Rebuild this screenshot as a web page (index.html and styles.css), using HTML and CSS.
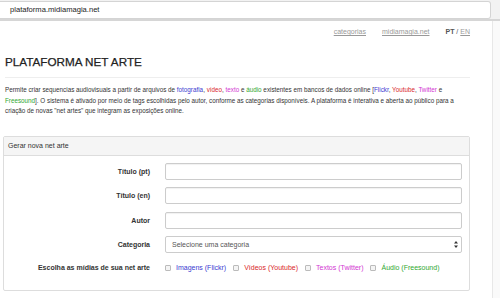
FILE: index.html
```html
<!DOCTYPE html>
<html>
<head>
  <title>Plataforma Net Arte</title>
  <link rel="stylesheet" href="styles.css">
</head>
<body>
  <div class="topbar">
    <div class="address">plataforma.midiamagia.net</div>
  </div>
  <div class="window">
    <div class="page">
      <div class="nav">
        <a href="#">categorias</a>
        <a href="#">midiamagia.net</a>
        <span class="lang"><b>PT</b> / <a href="#">EN</a></span>
      </div>
      <div class="content">
        <h1>PLATAFORMA NET ARTE</h1>
        <p class="intro">Permite criar sequencias audiovisuais a partir de arquivos de <span class="c-img">fotografia</span>, <span class="c-vid">vídeo</span>, <span class="c-txt">texto</span> e <span class="c-aud">áudio</span> existentes em bancos de dados online [<span class="c-img">Flickr</span>, <span class="c-vid">Youtube</span>, <span class="c-txt">Twitter</span> e<br><span class="c-aud">Freesound</span>]. O sistema é ativado por meio de tags escolhidas pelo autor, conforme as categorias disponíveis. A plataforma é interativa e aberta ao público para a<br>criação de novas "net artes" que integram as exposições online.</p>

        <div class="panel">
          <div class="panel-heading">Gerar nova net arte</div>
          <div class="panel-body">
            <div class="form-row">
              <label>Título (pt)</label>
              <div class="field"><input type="text" class="input"></div>
            </div>
            <div class="form-row">
              <label>Título (en)</label>
              <div class="field"><input type="text" class="input"></div>
            </div>
            <div class="form-row">
              <label>Autor</label>
              <div class="field"><input type="text" class="input"></div>
            </div>
            <div class="form-row">
              <label>Categoria</label>
              <div class="field">
                <div class="select">
                  <span>Selecione uma categoria</span>
                  <svg width="4" height="7" viewBox="0 0 4 7"><path d="M2 0 L4 2.5 L0 2.5 Z M2 7 L4 4.5 L0 4.5 Z" fill="#333"/></svg>
                </div>
              </div>
            </div>
            <div class="form-row checks-row">
              <label>Escolha as mídias de sua net arte</label>
              <div class="field checks">
                <span class="check"><span class="box"></span><span class="c-img">Imagens (Flickr)</span></span>
                <span class="check"><span class="box"></span><span class="c-vid">Vídeos (Youtube)</span></span>
                <span class="check"><span class="box"></span><span class="c-txt">Textos (Twitter)</span></span>
                <span class="check"><span class="box"></span><span class="c-aud">Áudio (Freesound)</span></span>
              </div>
            </div>
          </div>
        </div>
      </div>
    </div>
    <div class="scrollbar"></div>
  </div>
</body>
</html>
```
FILE: styles.css
```css
:root {
  --text-color: #333;
  --border-color: #ddd;
  --input-border: #ccc;
  --media-img: #3b3bd1;
  --media-vid: #d9262b;
  --media-txt: #d236d2;
  --media-aud: #2fa82f;
}

body {
  margin: 0;
  font-family: "Liberation Sans", Arial, sans-serif;
  color: var(--text-color);
  background-color: #fff;
}

.topbar {
  height: 18px;
  padding-top: 1px;
  padding-right: 9px;
  background-color: #f2f2f2;
  border-bottom: 2px solid #d6d6d6;
}

.address {
  height: 16px;
  padding-left: 10px;
  background-color: #fff;
  border: 1px solid #d4d4d4;
  border-left: none;
  border-radius: 0 3px 3px 0;
  font-size: 7.6px;
  line-height: 16px;
  color: #222;
}

.window {
  display: flex;
}

.page {
  width: 492px;
  border-right: 1px solid #e8e8e8;
  height: 277px;
  overflow: hidden;
}

.scrollbar {
  flex: 1;
  background-color: #fafafa;
}

.nav {
  display: flex;
  justify-content: flex-end;
  gap: 16px;
  padding: 6px 22px 0 0;
  font-size: 7px;
  line-height: 10px;
}

.nav a {
  color: #999;
}

.lang {
  color: #555;
}

.lang a {
  color: #999;
}

.content {
  width: 467px;
  padding-left: 3px;
}

h1 {
  margin: 18px 0 0 2px;
  padding-bottom: 8px;
  border-bottom: 1px solid #eee;
  font-size: 11.7px;
  font-weight: normal;
  line-height: 14px;
  color: #222;
  -webkit-text-stroke: 0.25px #222;
}

.intro {
  margin: 7px 0 0 2px;
  font-size: 6.3px;
  line-height: 10.5px;
  color: #333;
}

.c-img { color: var(--media-img); }
.c-vid { color: var(--media-vid); }
.c-txt { color: var(--media-txt); }
.c-aud { color: var(--media-aud); }

.panel {
  margin-top: 19px;
  border: 1px solid var(--border-color);
  border-radius: 2px;
}

.panel-heading {
  height: 18px;
  padding-left: 4px;
  background-color: #f5f5f5;
  border-bottom: 1px solid var(--border-color);
  font-size: 7px;
  line-height: 18px;
}

.panel-body {
  padding: 7px 7px 19px 0;
}

.form-row {
  display: flex;
  align-items: center;
  gap: 15px;
  margin-bottom: 7.5px;
}

.form-row label {
  width: 146px;
  flex: none;
  text-align: right;
  font-size: 7px;
  font-weight: bold;
}

.field {
  flex: 1;
}

.input {
  display: block;
  box-sizing: border-box;
  width: 100%;
  height: 17px;
  margin: 0;
  border: 1px solid var(--input-border);
  border-radius: 2px;
  box-shadow: inset 0 1px 1px rgba(0, 0, 0, 0.06);
  background-color: #fff;
}

.select {
  display: flex;
  align-items: center;
  justify-content: space-between;
  box-sizing: border-box;
  height: 17px;
  padding: 0 3px 0 6px;
  border: 1px solid var(--input-border);
  border-radius: 2px;
  background-color: #fff;
  font-size: 7px;
  color: #555;
}

.checks-row {
  margin-top: 11px;
  margin-bottom: 0;
}

.checks {
  display: flex;
  gap: 7px;
  font-size: 7px;
}

.check {
  display: flex;
  align-items: center;
  gap: 5px;
}

.box {
  width: 4px;
  height: 4px;
  border: 1px solid #bbb;
  border-radius: 1px;
  background-color: #f4f4f4;
}
```
